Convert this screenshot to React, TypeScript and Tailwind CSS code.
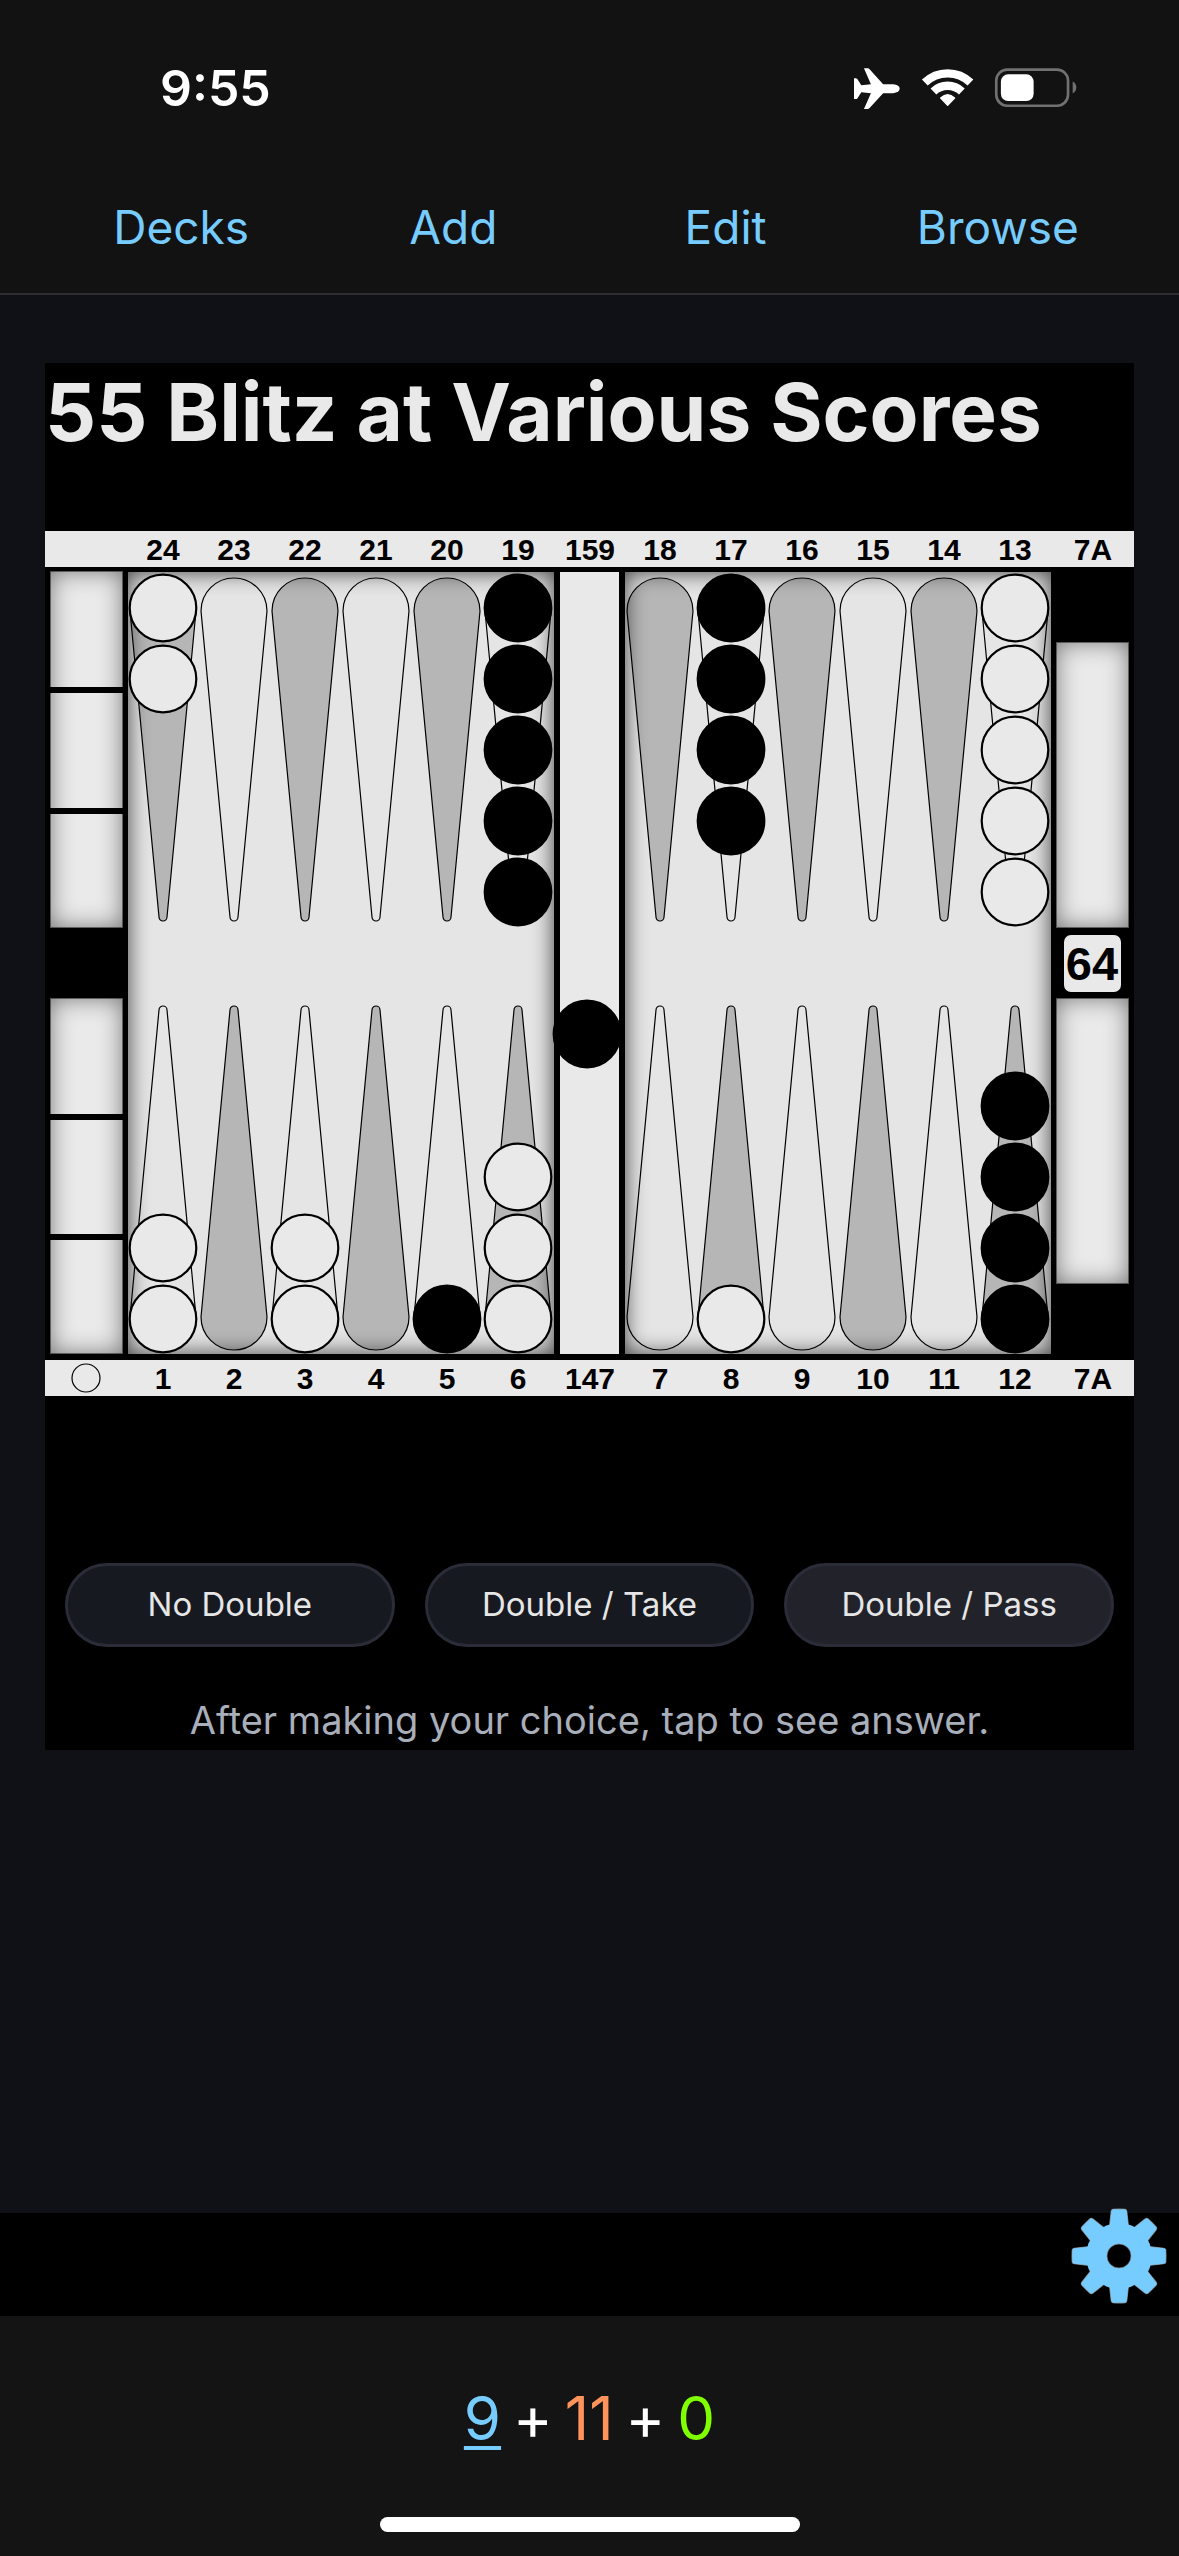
type Side = "white" | "black";

interface PointData {
  label: string;
  checkers?: { side: Side; count: number };
}

const PITCH = 71;
const LEFT_QUADRANT = 118;
const RIGHT_QUADRANT = 615;

const topPoints: PointData[] = [
  { label: "24", checkers: { side: "white", count: 2 } },
  { label: "23" },
  { label: "22" },
  { label: "21" },
  { label: "20" },
  { label: "19", checkers: { side: "black", count: 5 } },
  { label: "18" },
  { label: "17", checkers: { side: "black", count: 4 } },
  { label: "16" },
  { label: "15" },
  { label: "14" },
  { label: "13", checkers: { side: "white", count: 5 } },
];

const bottomPoints: PointData[] = [
  { label: "1", checkers: { side: "white", count: 2 } },
  { label: "2" },
  { label: "3", checkers: { side: "white", count: 2 } },
  { label: "4" },
  { label: "5", checkers: { side: "black", count: 1 } },
  { label: "6", checkers: { side: "white", count: 3 } },
  { label: "7" },
  { label: "8", checkers: { side: "white", count: 1 } },
  { label: "9" },
  { label: "10" },
  { label: "11" },
  { label: "12", checkers: { side: "black", count: 4 } },
];

const columnX = (i: number) => (i < 6 ? LEFT_QUADRANT + PITCH * i : RIGHT_QUADRANT + PITCH * (i - 6));

function Checker({ x, y, side }: { x: number; y: number; side: Side }) {
  return (
    <circle cx={x} cy={y} r={33.3} fill={side === "white" ? "#e9e9e9" : "#000"} stroke="#000" strokeWidth={2.2} />
  );
}

function Recess({
  id,
  x,
  y,
  width,
  height,
  blur,
  opacity,
}: {
  id: string;
  x: number;
  y: number;
  width: number;
  height: number;
  blur: number;
  opacity: number;
}) {
  const x2 = x + width;
  const y2 = y + height;
  return (
    <g clipPath={`url(#${id}-clip)`}>
      <clipPath id={`${id}-clip`}>
        <rect x={x} y={y} width={width} height={height} />
      </clipPath>
      <filter id={`${id}-blur`} filterUnits="userSpaceOnUse" x={x - 60} y={y - 60} width={width + 120} height={height + 120}>
        <feGaussianBlur stdDeviation={blur} />
      </filter>
      <path
        d={`M${x - 50} ${y - 50}H${x2 + 50}V${y2 + 50}H${x - 50}Z M${x} ${y}V${y2}H${x2}V${y}Z`}
        fillRule="evenodd"
        fill="#000"
        opacity={opacity}
        filter={`url(#${id}-blur)`}
      />
    </g>
  );
}

function Tray({ id, x, y, height, dividers = [] }: { id: string; x: number; y: number; height: number; dividers?: number[] }) {
  return (
    <g>
      <rect x={x} y={y} width={73} height={height} fill="#eaeaea" />
      <Recess id={id} x={x} y={y} width={73} height={height} blur={12} opacity={0.5} />
      <rect x={x + 0.5} y={y + 0.5} width={72} height={height - 1} fill="none" stroke="#000" strokeOpacity={0.45} />
      {dividers.map((d) => (
        <rect key={d} x={x} y={d} width={73} height={6} fill="#000" />
      ))}
    </g>
  );
}

function Board() {
  return (
    <svg
      viewBox="0 0 1089 865"
      className="block h-auto w-full font-['Liberation_Sans',Arial,sans-serif]"
      role="img"
      aria-label="Backgammon position"
    >
      <rect width={1089} height={865} fill="#000" />
      <rect width={1089} height={36} fill="#e9e9e9" />
      <rect y={829} width={1089} height={36} fill="#e9e9e9" />

      <Tray id="tray-tl" x={5} y={40} height={357} dividers={[156, 277]} />
      <Tray id="tray-bl" x={5} y={467} height={356} dividers={[583, 703]} />
      <Tray id="tray-tr" x={1011} y={111} height={286} />
      <Tray id="tray-br" x={1011} y={467} height={286} />

      <rect x={83} y={41} width={426} height={782} fill="#e5e5e5" />
      <rect x={580} y={41} width={426} height={782} fill="#e5e5e5" />
      <rect x={515} y={41} width={59} height={782} fill="#e9e9e9" />

      {topPoints.map((p, i) => (
        <path
          key={p.label}
          transform={`translate(${columnX(i)} 0)`}
          d="M-33 80A33 33 0 0 1 33 80L4 386A4 4 0 0 1 -4 386Z"
          fill={i % 2 === 0 ? "#b6b6b6" : "#e5e5e5"}
          stroke="#000"
          strokeWidth={1.2}
        />
      ))}
      {bottomPoints.map((p, i) => (
        <path
          key={p.label}
          transform={`translate(${columnX(i)} 0)`}
          d="M-33 786A33 33 0 0 0 33 786L4 479A4 4 0 0 0 -4 479Z"
          fill={i % 2 === 0 ? "#e5e5e5" : "#b6b6b6"}
          stroke="#000"
          strokeWidth={1.2}
        />
      ))}

      <Recess id="left-field" x={83} y={41} width={426} height={782} blur={11} opacity={0.72} />
      <Recess id="right-field" x={580} y={41} width={426} height={782} blur={11} opacity={0.72} />

      {topPoints.map((p, i) =>
        Array.from({ length: p.checkers?.count ?? 0 }, (_, k) => (
          <Checker key={`${p.label}-${k}`} x={columnX(i)} y={77 + PITCH * k} side={p.checkers!.side} />
        )),
      )}
      {bottomPoints.map((p, i) =>
        Array.from({ length: p.checkers?.count ?? 0 }, (_, k) => (
          <Checker key={`${p.label}-${k}`} x={columnX(i)} y={788 - PITCH * k} side={p.checkers!.side} />
        )),
      )}
      <Checker x={542} y={503} side="black" />

      <g fontSize={30} fontWeight={700} textAnchor="middle" fill="#000">
        {topPoints.map((p, i) => (
          <text key={p.label} x={columnX(i)} y={29}>
            {p.label}
          </text>
        ))}
        <text x={545} y={29}>159</text>
        <text x={1048} y={29}>7A</text>
        {bottomPoints.map((p, i) => (
          <text key={p.label} x={columnX(i)} y={858}>
            {p.label}
          </text>
        ))}
        <text x={545} y={858}>147</text>
        <text x={1048} y={858}>7A</text>
      </g>
      <circle cx={41} cy={847} r={14} fill="none" stroke="#000" strokeWidth={1.2} />

      <rect x={1019} y={404} width={57} height={57} rx={7} fill="#e9e9e9" />
      <text x={1047} y={449} fontSize={47} fontWeight={700} textAnchor="middle" fill="#000">
        64
      </text>
    </svg>
  );
}

function StatusIcons() {
  return (
    <svg viewBox="72 50 674 130" className="h-[43px] w-[225px]" aria-label="Airplane mode, Wi-Fi, battery 45%">
      <path
        fill="#fff"
        d="M102 54h11q4 0 6 3L160 102H190Q210 104 210 115Q210 127 190 129H160L119 174q-3 3-6 3H102L123 129L94 126L82 145q-2 2-5 2H72V84h5q3 0 5 2L94 105L123 102Z"
      />
      <g fill="none" stroke="#fff" strokeWidth={25}>
        <path d="M286 97A99 99 0 0 1 424 97" />
        <path d="M312 124A62 62 0 0 1 398 124" />
      </g>
      <path fill="#fff" stroke="#fff" strokeWidth={4} strokeLinejoin="round" d="M355 166L334 144Q355 124 376 144Z" />
      <rect x={502} y={58} width={217} height={109} rx={33} fill="none" stroke="#717171" strokeWidth={8} />
      <rect x={516} y={72} width={99} height={81} rx={22} fill="#fff" />
      <path fill="#717171" d="M733 94Q744 100 744 112Q744 124 733 130Z" />
    </svg>
  );
}

const toothAngles = [0, 45, 90, 135, 180, 225, 270, 315];
const toothPath = "M-28 -90L-23 -134Q-22 -139 -18 -140Q0 -141 18 -140Q22 -139 23 -134L28 -90Z";

function Gear() {
  return (
    <svg viewBox="-144 -144 288 288" className="size-24" aria-hidden="true">
      <g stroke="#858585" strokeWidth={4} fill="#858585">
        {toothAngles.map((a) => (
          <path key={a} transform={`rotate(${a})`} d={toothPath} />
        ))}
      </g>
      <circle r={99} fill="#77ccff" />
      <g fill="#77ccff">
        {toothAngles.map((a) => (
          <path key={a} transform={`rotate(${a})`} d={toothPath} />
        ))}
      </g>
      <circle r={36} fill="#000" stroke="#858585" strokeWidth={2} />
    </svg>
  );
}

const navItems = ["Decks", "Add", "Edit", "Browse"];

export default function App() {
  return (
    <div className="flex min-h-screen flex-col bg-[#101116] font-['Inter',sans-serif]">
      <header className="border-b-2 border-[#2e2e30] bg-[#121212] pt-[58px] pb-9">
        <div className="flex items-center justify-between pr-[101px] pl-40 text-white">
          <span className="text-[50px] leading-[60px] font-semibold">9:55</span>
          <StatusIcons />
        </div>
        <nav className="mt-[79px] grid grid-cols-4 px-[45px]">
          {navItems.map((item) => (
            <a key={item} href="#" className="text-center text-[46px] leading-[60px] text-[#77ccff]">
              {item}
            </a>
          ))}
        </nav>
      </header>

      <main className="flex-1 px-[45px] pt-[68px]">
        <section className="bg-black">
          <h1 className="text-[80px] leading-[98px] font-bold whitespace-nowrap text-[#e9e9e9]">
            55 Blitz at Various Scores
          </h1>
          <div className="mt-[70px]">
            <Board />
          </div>
          <div className="mt-[167px] grid grid-cols-3 gap-[30px] px-5 text-[33px] text-[#e6e6e6]">
            <button type="button" className="h-[84px] rounded-full border-3 border-[#2a2d38] bg-[#171920]">
              No Double
            </button>
            <button type="button" className="h-[84px] rounded-full border-3 border-[#2a2d38] bg-[#171920]">
              Double / Take
            </button>
            <button type="button" className="h-[84px] rounded-full border-3 border-[#2a2d38] bg-[#22232a]">
              Double / Pass
            </button>
          </div>
          <p className="mt-[43px] text-center text-[38px] leading-[60px] text-[#a9afba]">
            After making your choice, tap to see answer.
          </p>
        </section>
      </main>

      <div className="relative h-[103px] bg-black">
        <button type="button" aria-label="Settings" className="absolute -top-[5px] right-3">
          <Gear />
        </button>
      </div>

      <footer className="flex flex-col items-center bg-[#141414] pt-[66px] pb-6">
        <p className="flex gap-3 text-[60px] leading-[72px] text-white">
          <span className="text-[#77ccff] underline decoration-4 underline-offset-6">9</span>
          <span>+</span>
          <span className="text-[#ff935c]">11</span>
          <span>+</span>
          <span className="text-[#80ff00]">0</span>
        </p>
        <div className="mt-[63px] h-[15px] w-[420px] rounded-full bg-white" />
      </footer>
    </div>
  );
}
